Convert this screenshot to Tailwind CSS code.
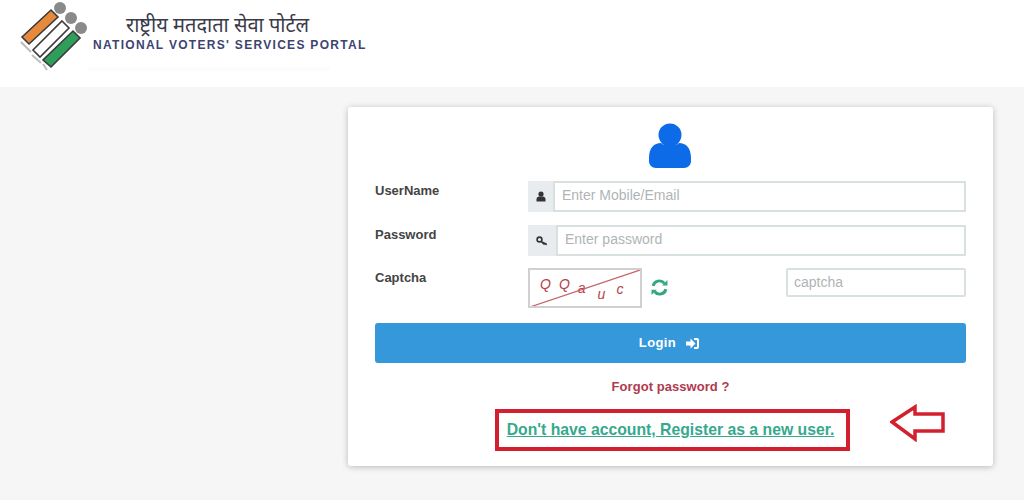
<!DOCTYPE html>
<html lang="en">
<head>
    <meta charset="UTF-8">
    <title>National Voters' Services Portal</title>
    <script src="https://cdn.jsdelivr.net/npm/@tailwindcss/browser@4"></script>
</head>
<body class="bg-[#f6f6f6] font-['Liberation_Sans',Arial,sans-serif] w-[1024px] h-[500px] overflow-hidden">
    <!-- Header -->
    <header class="bg-white h-[87px] flex items-start pl-[19px]">
        <svg width="70" height="72" viewBox="0 0 70 72" class="shrink-0">
            <circle cx="41" cy="8" r="6" fill="#8a8a8a"/>
            <circle cx="52" cy="18" r="6" fill="#8a8a8a"/>
            <circle cx="62" cy="28" r="6" fill="#8a8a8a"/>
            <path d="M32 10 L39 17 L10 44 L3 37 Z" fill="#e58a3c" stroke="#3a3a3a" stroke-width="1.6"/>
            <path d="M43 21 L50 28 L21 57 L14 50 Z" fill="#fff" stroke="#3a3a3a" stroke-width="1.6"/>
            <path d="M54 31 L61 38 L32 67 L24 60 Z" fill="#2f9e5b" stroke="#3a3a3a" stroke-width="1.6"/>
            <path d="M2 42 L12 52 M13 55 L22 63 M24 64 L28 70" stroke="#bdbdbd" stroke-width="2" fill="none"/>
        </svg>
        <div class="ml-[4px] pt-[13px] w-[280px]">
            <div class="pl-[33px] text-[20px] leading-[24px] text-[#3a3a4a] font-['Noto_Sans','Noto_Sans_Devanagari','Liberation_Sans',sans-serif] whitespace-nowrap">राष्ट्रीय मतदाता सेवा पोर्टल</div>
            <div class="text-[12px] leading-[15px] font-bold tracking-[1.3px] text-[#3d4470] whitespace-nowrap mt-[1px]">NATIONAL VOTERS' SERVICES PORTAL</div>
            <div class="h-[4px] w-[242px] -ml-[5px] mt-[14px] bg-[#fcfcfc]"></div>
        </div>
    </header>

    <!-- Login card -->
    <main class="relative ml-[348px] mt-[20px] w-[645px] h-[359px] bg-white rounded-[3px] shadow-[0_1px_6px_rgba(0,0,0,0.25)] px-[27px] pt-[16px]">
        <div class="flex justify-center pr-[1px]">
            <svg width="42" height="45" viewBox="0 0 42 45">
                <circle cx="21" cy="12" r="11.5" fill="#0d6be8"/>
                <path d="M0 35 C0 25 5 20 12 20 C15 23.5 27 23.5 30 20 C37 20 42 25 42 35 L42 38 C42 42 39 45 35 45 L7 45 C3 45 0 42 0 38 Z" fill="#0d6be8"/>
            </svg>
        </div>

        <!-- UserName -->
        <div class="flex mt-[13px] h-[31px]">
            <label class="w-[153px] pt-[1px] text-[13px] font-bold text-[#444] leading-[18px]">UserName</label>
            <div class="flex-1 flex">
                <span class="w-[25px] bg-[#e9ecef] flex items-center justify-center">
                    <svg width="10" height="11" viewBox="0 0 10 11"><circle cx="5" cy="3" r="2.6" fill="#333"/><path d="M0.5 10.5 L0.5 8 C0.5 6.5 2 5.5 3 5.5 L7 5.5 C8 5.5 9.5 6.5 9.5 8 L9.5 10.5 Z" fill="#333"/></svg>
                </span>
                <div class="flex-1 border-2 border-[#d8e0e0] pl-[7px] pb-[2px] text-[14px] text-[#b0b4b6] flex items-center">Enter Mobile/Email</div>
            </div>
        </div>

        <!-- Password -->
        <div class="flex mt-[13px] h-[31px]">
            <label class="w-[153px] pt-[1px] text-[13px] font-bold text-[#444] leading-[18px]">Password</label>
            <div class="flex-1 flex">
                <span class="w-[28px] bg-[#e9ecef] flex items-center justify-center">
                    <svg width="12" height="10" viewBox="0 0 12 10"><circle cx="3.5" cy="3.5" r="2.4" fill="none" stroke="#333" stroke-width="1.6"/><path d="M5.5 5 L11 7.500 L10.500 9.500 L9 8.500 L8 9 L5 6.500 Z" fill="#333"/></svg>
                </span>
                <div class="flex-1 border-2 border-[#d8e0e0] pl-[7px] pb-[2px] text-[14px] text-[#b0b4b6] flex items-center">Enter password</div>
            </div>
        </div>

        <!-- Captcha -->
        <div class="flex mt-[12px] h-[40px]">
            <label class="w-[153px] pt-[1px] text-[13px] font-bold text-[#444] leading-[18px]">Captcha</label>
            <div class="relative w-[114px] h-[40px] border-2 border-[#d0d0d0] flex items-center pl-[10px] italic text-[14px] text-[#b5434b] overflow-hidden">
                <span class="-translate-y-[4px]">Q</span>
                <span class="ml-[8px] -translate-y-[4px]">Q</span>
                <span class="ml-[8px]">a</span>
                <span class="ml-[12px] translate-y-[6px]">u</span>
                <span class="ml-[11px] translate-y-[1px]">c</span>
                <svg class="absolute left-0 top-0" width="110" height="36" viewBox="0 0 110 36"><path d="M0 37 L110 0" stroke="#c9606a" stroke-width="1.2"/></svg>
            </div>
            <svg class="ml-[9px] mt-[11px]" width="17" height="17" viewBox="0 0 16 16" fill="none" stroke="#35a583" stroke-width="2.8">
                <path d="M2 6.500 A6 6 0 0 1 12.500 4"/>
                <path d="M14 9.500 A6 6 0 0 1 3.500 12"/>
                <path d="M15.500 1 L15.500 6 L10.500 6 Z M0.500 15 L0.500 10 L5.500 10 Z" fill="#35a583" stroke="none"/>
            </svg>
            <div class="ml-auto w-[180px] h-[29px] border-2 border-[#d8e0e0] rounded-[2px] pl-[6px] text-[14px] text-[#b0b4b6] flex items-center">captcha</div>
        </div>

        <!-- Login button -->
        <button class="w-full h-[40px] mt-[15px] bg-[#3498db] rounded-[3px] text-white text-[13px] font-bold tracking-[0.4px] flex items-center justify-center gap-[10px] pr-[3px]">
            Login
            <svg width="13" height="11" viewBox="0 0 13 11" fill="#fff"><path d="M0 3.500 L4.500 3.500 L4.500 0.500 L9.500 5.500 L4.500 10.500 L4.500 7.500 L0 7.500 Z"/><path d="M8 0 L11 0 C12.200 0 13 .8 13 2 L13 9 C13 10.200 12.200 11 11 11 L8 11 L8 9 L11 9 L11 2 L8 2 Z"/></svg>
        </button>

        <a class="block text-center mt-[16px] text-[13px] leading-[16px] font-bold tracking-[0.05px] text-[#b03a4e]">Forgot password ?</a>

        <!-- Register link, boxed -->
        <div class="w-[355px] h-[42px] ml-[120px] mt-[14px] border-[4px] border-[#d3202e] flex items-center justify-center pb-[1px] pr-[4px]">
            <a class="text-[15.75px] font-bold underline text-[#36a98c] whitespace-nowrap">Don't have account, Register as a new user.</a>
        </div>

        <!-- Annotation arrow -->
        <svg class="absolute left-[542px] top-[297px]" width="56" height="38" viewBox="0 0 56 38" fill="none" stroke="#d3202e" stroke-width="3.5">
            <path d="M2 18 L25 3 L25 10 L53 10 L53 27 L25 27 L25 35 Z"/>
        </svg>
    </main>
</body>
</html>
